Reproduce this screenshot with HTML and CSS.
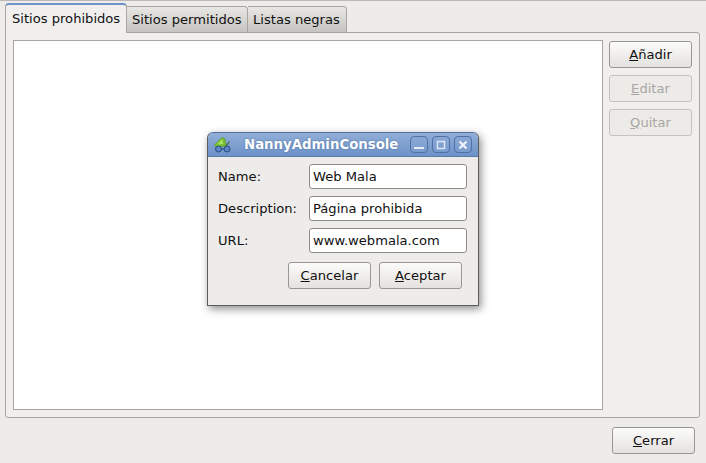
FILE: index.html
```html
<!DOCTYPE html>
<html>
<head>
    <link rel="stylesheet" href="styles.css">
</head>
<body>
    <div class="main">
        <div class="tabs">
            <div class="tab active">Sitios prohibidos</div>
            <div class="tab">Sitios permitidos</div>
            <div class="tab">Listas negras</div>
        </div>
        <div class="panel">
            <div class="list"></div>
            <div class="side">
                <div class="btn"><span><u>A</u>ñadir</span></div>
                <div class="btn off"><span><u>E</u>ditar</span></div>
                <div class="btn off"><span><u>Q</u>uitar</span></div>
            </div>
        </div>
        <div class="footer">
            <div class="btn close"><span><u>C</u>errar</span></div>
        </div>
    </div>

    <div class="dialog">
        <div class="titlebar">
            <svg class="appicon" width="18" height="16" viewBox="0 0 18 16">
                <path d="M0.500 8 L8 0.500 L10.500 1.500 L12.500 9 L2 10 Z" fill="#74bf33" stroke="#5a9a2c" stroke-width="0.700"/>
                <path d="M3 7.500 L8 2 L9.500 7 Z" fill="#a6e05c"/>
                <path d="M12 9 L15.500 4.500" stroke="#3c5f3e" stroke-width="1.200" fill="none"/>
                <circle cx="4.500" cy="12" r="3" fill="#5b86c6" stroke="#2a4b80" stroke-width="1"/>
                <circle cx="13" cy="12" r="3" fill="#5b86c6" stroke="#2a4b80" stroke-width="1"/>
                <path d="M7.500 12 H10" stroke="#2a4b80" stroke-width="1.200"/>
            </svg>
            <div class="title">NannyAdminConsole</div>
            <div class="winbtns">
                <div class="winbtn">
                    <svg width="10" height="10" viewBox="0 0 10 10"><rect x="0" y="7" width="10" height="2" fill="#e6ecf6"/></svg>
                </div>
                <div class="winbtn">
                    <svg width="10" height="10" viewBox="0 0 10 10"><rect x="1.500" y="1.500" width="7" height="7" fill="none" stroke="#dfe7f3" stroke-width="1.500"/></svg>
                </div>
                <div class="winbtn">
                    <svg width="10" height="10" viewBox="0 0 10 10"><path d="M1.500 1.500 L8.500 8.500 M8.500 1.500 L1.500 8.500" stroke="#eef2f9" stroke-width="2.200"/></svg>
                </div>
            </div>
        </div>
        <div class="dlgbody">
            <div class="row"><label>Name:</label><div class="input">Web Mala</div></div>
            <div class="row"><label>Description:</label><div class="input">Página prohibida</div></div>
            <div class="row"><label>URL:</label><div class="input">www.webmala.com</div></div>
            <div class="dlgbtns">
                <div class="btn"><span><u>C</u>ancelar</span></div>
                <div class="btn"><span><u>A</u>ceptar</span></div>
            </div>
        </div>
    </div>
</body>
</html>
```

FILE: styles.css
```css
html, body {
    margin: 0;
    padding: 0;
}
body {
    width: 706px;
    height: 463px;
    overflow: hidden;
    position: relative;
    background-color: #edecea;
    font-family: "DejaVu Sans", sans-serif;
    font-size: 13.1px;
    color: #101010;
}
.main {
    height: 463px;
    border-top: 1px solid #bdbab5;
    box-sizing: border-box;
    padding: 2px 5px 0 5px;
}
.tabs {
    display: flex;
    align-items: flex-end;
    height: 30px;
    margin-bottom: -1px;
    position: relative;
}
.tab {
    height: 27px;
    box-sizing: border-box;
    padding: 5px 5px 0 5px;
    width: 121px;
    border: 1px solid #a9a6a1;
    border-left: none;
    border-radius: 0 4px 0 0;
    background: linear-gradient(#e9e7e4, #c6c4c0);
    white-space: nowrap;
}
.tab:last-child {
    width: 99px;
}
.tab.active {
    height: 30px;
    width: 122px;
    padding: 6px 6px 0 6px;
    border: 1px solid #a9a6a1;
    border-top: 2px solid #6f93c6;
    border-bottom: none;
    border-radius: 4px 4px 0 0;
    background: #f0efee;
}
.panel {
    display: flex;
    width: 695px;
    height: 386px;
    box-sizing: border-box;
    padding: 7px;
    border: 1px solid #a9a6a1;
    border-radius: 0 3px 3px 3px;
    background-color: #f0efee;
}
.list {
    width: 590px;
    height: 370px;
    box-sizing: border-box;
    border: 1px solid #a9a6a1;
    background-color: #fff;
}
.side {
    display: flex;
    flex-direction: column;
    gap: 7px;
    margin-left: 6px;
    padding-top: 1px;
}
.btn {
    width: 83px;
    height: 27px;
    box-sizing: border-box;
    display: flex;
    align-items: center;
    justify-content: center;
    border: 1px solid #9a9791;
    border-radius: 3px;
    background: linear-gradient(#fbfbfa, #e4e2df);
    padding-bottom: 1px;
}
.btn.off {
    border-color: #c4c2bd;
    background: #ecebe8;
    color: #a9a7a3;
}
.footer {
    display: flex;
    justify-content: flex-end;
    padding-top: 9px;
    margin-right: 6px;
}
.dialog {
    position: absolute;
    left: 207px;
    top: 132px;
    width: 272px;
    height: 174px;
    box-sizing: border-box;
    border: 1px solid #5c5c5c;
    border-top-color: #4d6f9f;
    border-radius: 6px 6px 0 0;
    background-color: #edecea;
    box-shadow: 2px 3px 8px rgba(0,0,0,0.45);
}
.titlebar {
    display: flex;
    align-items: center;
    height: 23px;
    background: linear-gradient(#91aed7, #6c92c8);
    border-radius: 5px 5px 0 0;
    border-bottom: 1px solid #5a7cad;
    padding-left: 6px;
}
.appicon {
    flex: none;
}
.title {
    margin-left: 12px;
    font-weight: bold;
    color: #fff;
    font-size: 13.3px;
    width: 166px;
    white-space: nowrap;
    text-shadow: 0 0 2px #4a6a9c;
}
.winbtns {
    display: flex;
    gap: 4px;
}
.winbtn {
    width: 18px;
    height: 17px;
    box-sizing: border-box;
    display: flex;
    align-items: center;
    justify-content: center;
    border: 1px solid #4f71a5;
    border-radius: 4px;
    background: linear-gradient(#8aa8d4, #789bce);
}
.dlgbody {
    padding: 7px 11px 0 10px;
}
.row {
    display: flex;
    align-items: center;
    height: 25px;
    margin-bottom: 7px;
}
.row label {
    width: 91px;
    flex: none;
}
.input {
    width: 158px;
    height: 25px;
    box-sizing: border-box;
    border: 1px solid #8f8c86;
    border-radius: 3px;
    background-color: #fff;
    padding: 4px 3px 0 3px;
    white-space: nowrap;
}
.dlgbtns {
    display: flex;
    justify-content: flex-end;
    gap: 8px;
    margin-top: 2px;
    padding-top: 2px;
    padding-right: 5px;
}
```
